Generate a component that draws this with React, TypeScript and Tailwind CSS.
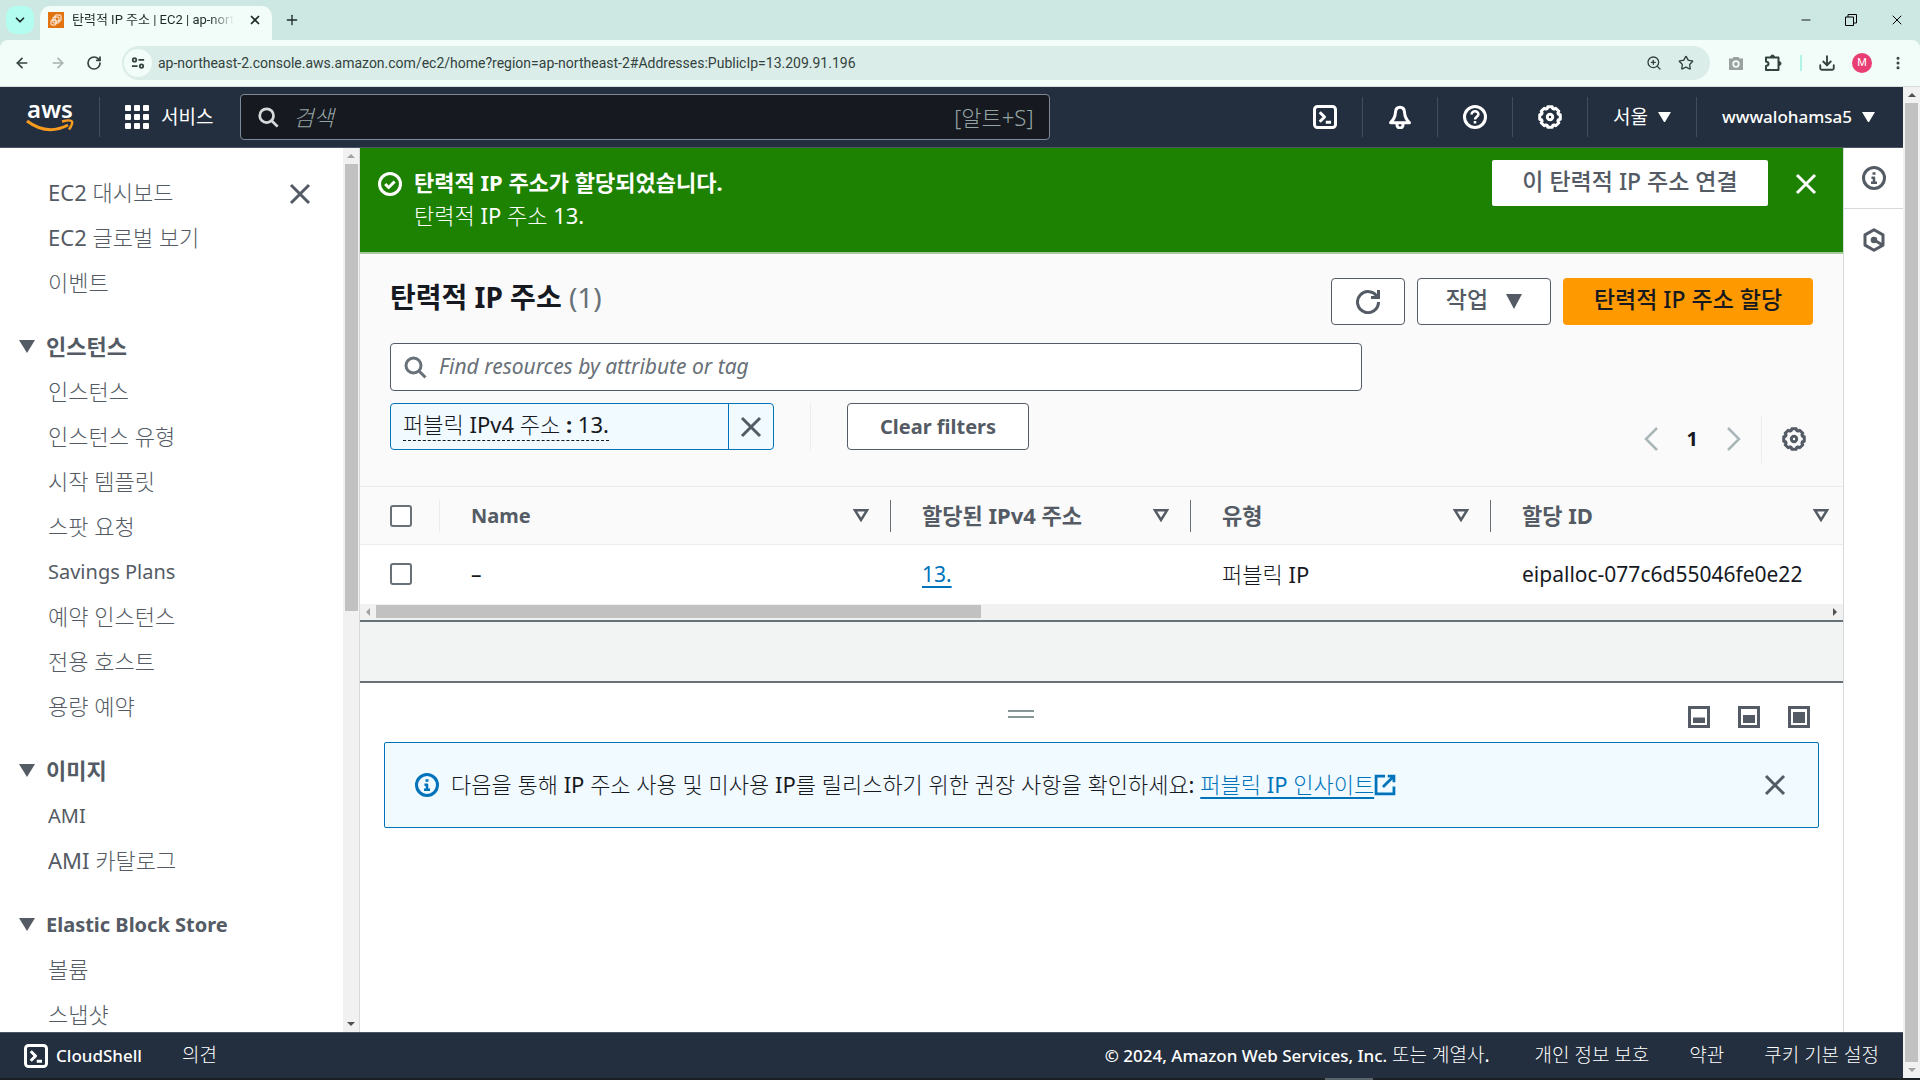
import type { ReactNode } from "react";
import {
    ArrowLeft,
    ArrowRight,
    ChevronDown,
    Download,
    EllipsisVertical,
    Minus,
    Plus,
    RotateCw,
    Star,
    X,
    ZoomIn,
} from "lucide-react";

const sections = [
    { title: "", items: ["EC2 대시보드", "EC2 글로벌 보기", "이벤트"] },
    {
        title: "인스턴스",
        items: [
            "인스턴스",
            "인스턴스 유형",
            "시작 템플릿",
            "스팟 요청",
            "Savings Plans",
            "예약 인스턴스",
            "전용 호스트",
            "용량 예약",
        ],
    },
    { title: "이미지", items: ["AMI", "AMI 카탈로그"] },
    { title: "Elastic Block Store", items: ["볼륨", "스냅샷"] },
];

const columns = [
    { label: "Name", width: "w-[451px]" },
    { label: "할당된 IPv4 주소", width: "w-[300px]" },
    { label: "유형", width: "w-[300px]" },
    { label: "할당 ID", width: "" },
];

// Body text uses the light Hangul cut; headings and buttons need the full family
const strongFont = "font-['Noto_Sans','Noto_Sans_CJK_KR',sans-serif]";

// Latin labels run wider than Hangul ones, so they are set a little smaller
const labelSize = (text: string) => (/[가-힣]/.test(text) ? "text-[22px]" : "text-xl");

// Eight soft teeth around the centre of a 16x16 box
const gearPath =
    Array.from({ length: 8 })
        .flatMap((_, i) =>
            [
                [-12, 7],
                [12, 7],
                [18, 5.9],
                [27, 5.9],
            ].map(([offset, r]) => {
                const a = ((i * 45 + offset) * Math.PI) / 180;
                return `${(8 + r * Math.cos(a)).toFixed(2)} ${(8 + r * Math.sin(a)).toFixed(2)}`;
            }),
        )
        .map((p, i) => (i === 0 ? "M" : "L") + p)
        .join("") + "Z";

function Icon({ children, className = "size-6" }: { children: ReactNode; className?: string }) {
    return (
        <svg
            viewBox="0 0 16 16"
            fill="none"
            stroke="currentColor"
            strokeWidth="2"
            strokeLinejoin="round"
            className={`shrink-0 ${className}`}
            aria-hidden="true"
        >
            {children}
        </svg>
    );
}

const CloseIcon = ({ className }: { className?: string }) => (
    <Icon className={className}>
        <path d="M2 2l12 12M14 2L2 14" />
    </Icon>
);

const SearchIcon = ({ className }: { className?: string }) => (
    <Icon className={className}>
        <circle cx="7" cy="7" r="5" />
        <path d="M15 15l-4.5-4.5" />
    </Icon>
);

const Gear = () => (
    <Icon>
        <path d={gearPath} />
        <circle cx="8" cy="8" r="1.8" />
    </Icon>
);

const CloudShellIcon = () => (
    <Icon>
        <rect x="1" y="1" width="14" height="14" rx="2" />
        <path d="M4.5 4.8L7.7 8l-3.2 3.2M8.5 11.5H12" />
    </Icon>
);

const InfoIcon = () => (
    <Icon>
        <circle cx="8" cy="8" r="7" />
        <path d="M6.3 7.8H8v3M6 11.2h4M7 5h2" strokeWidth="1.7" />
    </Icon>
);

const Caret = () => (
    <svg viewBox="0 0 12 10" className="w-[13px] shrink-0 fill-current" aria-hidden="true">
        <path d="M0 0h12L6 10z" />
    </svg>
);

const Arrow = ({ d }: { d: string }) => (
    <svg viewBox="0 0 8 8" className="size-2 shrink-0 fill-current" aria-hidden="true">
        <path d={d} />
    </svg>
);

function Browser() {
    return (
        <header className="bg-[#cde8e2] font-['Roboto','Noto_Sans_CJK_KR',sans-serif] text-[#1c2b28]">
            <div className="flex h-10 items-end">
                <button aria-label="탭 검색" className="mb-1.5 ml-1.5 flex size-7 items-center justify-center rounded-[10px] bg-[#b2fdef]">
                    <ChevronDown className="size-3.5" strokeWidth={3} />
                </button>
                <div className="ml-1.5 flex h-[34px] w-[232px] items-center rounded-t-[10px] bg-[#f2fcf9] pb-1.5 pl-2 pr-2.5">
                    <svg viewBox="0 0 16 16" className="size-4 shrink-0" fill="none" stroke="#fff" aria-hidden="true">
                        <path d="M0 0h16v16H0z" fill="#e2730f" stroke="none" />
                        <rect x="7" y="3" width="6" height="6" rx="1" />
                        <rect x="5" y="5" width="6" height="6" rx="1" />
                        <rect x="3" y="8" width="5" height="5" rx="1" />
                    </svg>
                    <span className="ml-2 bg-linear-to-r from-[#1c2b28] from-85% to-transparent bg-clip-text text-[13px] whitespace-nowrap text-transparent">
                        탄력적 IP 주소 | EC2 | ap-nort
                    </span>
                    <button aria-label="탭 닫기" className="ml-auto">
                        <X className="size-3.5" strokeWidth={3} />
                    </button>
                </div>
                <button aria-label="새 탭" className="mb-3 ml-3">
                    <Plus className="size-4" />
                </button>
                <div className="mb-3 ml-auto flex items-center gap-8 pr-[15px] text-black">
                    <Minus className="size-3.5" strokeWidth={1.5} />
                    <svg viewBox="0 0 12 12" className="size-3" fill="none" stroke="currentColor" aria-hidden="true">
                        <path d="M.5 3h8v8.500h-8zM3 3V.5h8.500V9H8.500" />
                    </svg>
                    <X className="size-4" strokeWidth={1.5} />
                </div>
            </div>
            <div className="flex h-[47px] items-center rounded-t-lg border-b border-[#d5dfdd] bg-[#f2fcf9] px-3.5 text-[#33423f]">
                <ArrowLeft className="size-4" strokeWidth={2.5} />
                <ArrowRight className="ml-5 size-4 opacity-40" strokeWidth={2.5} />
                <RotateCw className="ml-5 size-4" strokeWidth={2.5} />
                <div className="ml-5 flex h-[34px] flex-1 items-center rounded-full bg-[#dbede8] pr-4 pl-0.5">
                    <span className="flex size-7 items-center justify-center rounded-full bg-[#f2fcf9]">
                        <Icon className="size-3.5">
                            <circle cx="4" cy="4.500" r="2" />
                            <path d="M8.500 4.500H15M1 11.500h6.500" />
                            <circle cx="12" cy="11.500" r="2" />
                        </Icon>
                    </span>
                    <input
                        aria-label="주소창"
                        readOnly
                        value="ap-northeast-2.console.aws.amazon.com/ec2/home?region=ap-northeast-2#Addresses:PublicIp=13.209.91.196"
                        className="ml-1.5 min-w-0 flex-1 bg-transparent text-sm outline-none"
                    />
                    <ZoomIn className="size-4" />
                    <Star className="ml-4 size-4" />
                </div>
                <svg viewBox="0 0 16 16" className="ml-[18px] size-4 text-[#9aa19f]" aria-hidden="true">
                    <path d="M1 3.500h3.500L5.500 2h5l1 1.500H15V15H1z" fill="currentColor" />
                    <circle cx="8" cy="9" r="2.800" fill="currentColor" stroke="#f2fcf9" strokeWidth="1.800" />
                </svg>
                <svg viewBox="0 0 18 18" className="ml-5 size-[18px]" fill="none" stroke="currentColor" strokeWidth="2" strokeLinejoin="round" aria-hidden="true">
                    <path d="M2 3.500h12.500V16H2v-4q2.500-.5 2.500-2.300T2 7.500z" />
                    <path d="M6.500 3a2 2 0 0 1 4 0zM15 7.500a2 2 0 0 1 0 4z" fill="currentColor" strokeWidth="1" />
                </svg>
                <span className="ml-[18px] h-4 w-0.5 bg-[#b2f3e8]" />
                <Download className="ml-4 size-[18px]" strokeWidth={2.5} />
                <span className="ml-4 flex size-5 items-center justify-center rounded-full bg-[#e83e74] text-[11px] text-white">M</span>
                <EllipsisVertical className="ml-[18px] size-4" strokeWidth={2.5} />
            </div>
        </header>
    );
}

function TopNav() {
    const divider = <span className="h-10 w-px shrink-0 bg-[#414d5c]" />;
    return (
        <nav className="flex h-[61px] shrink-0 items-center border-b border-[#4b5563] bg-[#232f3e] pr-7 text-white">
            <a href="#home" aria-label="aws" className="ml-[26px] flex w-12 flex-col items-center">
                <span className="text-2xl leading-4 font-semibold">aws</span>
                <svg viewBox="0 0 48 14" className="mt-0.5 w-12" fill="none" stroke="#f79b1e" strokeWidth="3" aria-hidden="true">
                    <path d="M1 2q20 15 41 4" />
                    <path d="M36 2.500q9-2 10 0t-3 8" strokeWidth="2.500" />
                </svg>
            </a>
            <span className="ml-[25px] h-10 w-px bg-[#414d5c]" />
            <button className={`ml-[25px] flex items-center gap-3 text-[19px] ${strongFont}`}>
                <svg viewBox="0 0 24 24" className="size-6 fill-white" aria-hidden="true">
                    {[0, 9, 18].map((y) => [0, 9, 18].map((x) => <rect key={`${x}-${y}`} x={x} y={y} width="6" height="6" rx="1" />))}
                </svg>
                서비스
            </button>
            <div className="ml-[27px] flex h-[46px] max-w-[810px] flex-1 items-center rounded-sm border border-[#7d8998] bg-[#16191f] px-4">
                <SearchIcon className="size-[22px] text-[#d5dbdb]" />
                <input
                    aria-label="검색"
                    placeholder="검색"
                    className="ml-3.5 min-w-0 flex-1 bg-transparent text-[22px] italic outline-none placeholder:text-[#95a5a6]"
                />
                <span className="text-[22px] font-light text-[#95a5a6]">[알트+S]</span>
            </div>
            <div className="ml-auto flex items-center gap-[25px]">
                <button aria-label="CloudShell">
                    <CloudShellIcon />
                </button>
                {divider}
                <button aria-label="알림">
                    <Icon>
                        <path d="M8 1.500c-2 0-2.900 1.600-3 3.300C4.800 8 3.700 10 1.700 11.800h12.600C12.300 10 11.200 8 11 4.800c-.1-1.700-1-3.300-3-3.300z" />
                        <path d="M6 12.500v.8a2 2 0 0 0 4 0v-.8" />
                    </Icon>
                </button>
                {divider}
                <button aria-label="도움말">
                    <Icon>
                        <circle cx="8" cy="8" r="7" />
                        <path d="M5.700 6.300C5.700 5 6.700 4.200 8 4.200s2.300.9 2.300 2c0 1.600-2.300 1.600-2.300 3.400M8 10.700v1.700" strokeWidth="1.700" />
                    </Icon>
                </button>
                {divider}
                <button aria-label="설정">
                    <Gear />
                </button>
                {divider}
                <button className={`flex items-center gap-2.5 text-[19px] ${strongFont}`}>
                    서울 <Caret />
                </button>
                {divider}
                <button className="flex items-center gap-2.5 text-[17px] font-medium">
                    wwwalohamsa5 <Caret />
                </button>
            </div>
        </nav>
    );
}

function Sidebar() {
    return (
        <aside className="flex w-[360px] shrink-0 border-r border-[#d5dbdb] bg-white text-[#545b64]">
            <div className="flex flex-1 overflow-hidden pt-[22px]">
                <div className="flex-1">
                    {sections.map((section) => (
                        <div key={section.title} className="mb-[19px]">
                            {section.title && (
                                <button
                                    className={`flex h-[45px] items-center gap-[11px] pl-[19px] font-bold ${strongFont} ${labelSize(section.title)}`}
                                >
                                    <svg viewBox="0 0 16 13" className="w-4 fill-current" aria-hidden="true">
                                        <path d="M0 0h16L8 13z" />
                                    </svg>
                                    {section.title}
                                </button>
                            )}
                            <ul>
                                {section.items.map((item) => (
                                    <li key={item} className={`h-[45px] pl-12 leading-[45px] ${labelSize(item)}`}>
                                        <a href="#nav">{item}</a>
                                    </li>
                                ))}
                            </ul>
                        </div>
                    ))}
                </div>
                <button aria-label="닫기" className="mt-3 mr-[31px] self-start">
                    <CloseIcon />
                </button>
            </div>
            <div className="flex w-4 flex-col items-center bg-[#f1f1f1] py-1 text-[#a3a3a3]">
                <Arrow d="M0 6h8L4 2z" />
                <div className="mt-1 h-[51%] w-[13px] bg-[#c1c1c1]" />
                <span className="mt-auto text-[#505050]">
                    <Arrow d="M0 2h8L4 6z" />
                </span>
            </div>
        </aside>
    );
}

function Flash() {
    return (
        <div className="flex h-[106px] shrink-0 items-start border-b-2 border-[#a9c9a0] bg-[#1d8102] pt-3 pr-[25px] pl-[18px] text-[22px] text-white">
            <Icon className="mt-3 size-6">
                <circle cx="8" cy="8" r="7" />
                <path d="M4.800 8l2.300 2.300 4-4" />
            </Icon>
            <div className="mt-1.5 ml-3 leading-[33px]">
                <h2 className={`font-bold ${strongFont}`}>탄력적 IP 주소가 할당되었습니다.</h2>
                <p>탄력적 IP 주소 13.</p>
            </div>
            <button className={`ml-auto h-[46px] w-[276px] rounded-xs bg-white pb-1 text-[23px] font-medium text-[#545b64] ${strongFont}`}>
                이 탄력적 IP 주소 연결
            </button>
            <button aria-label="닫기" className="mt-3 ml-[26px]">
                <CloseIcon />
            </button>
        </div>
    );
}

function AddressTable() {
    return (
        <section className="bg-[#fafafa]">
            <div className="px-[30px] pt-6">
                <div className="flex items-start gap-3">
                    <h1 className={`mr-auto text-[28px] leading-[38px] font-bold text-[#16191f] ${strongFont}`}>
                        탄력적 IP 주소 <span className="font-normal text-[#687078]">(1)</span>
                    </h1>
                    <button aria-label="새로 고침" className="flex h-[47px] w-[74px] items-center justify-center rounded-sm border border-[#545b64] bg-white text-[#545b64]">
                        <Icon>
                            <path d="M10 5h5V0M15 8a7 7 0 1 1-.700-3" strokeLinejoin="miter" />
                        </Icon>
                    </button>
                    <button
                        className={`flex h-[47px] w-[134px] items-center justify-center gap-[18px] rounded-sm border border-[#545b64] bg-white text-[23px] font-medium text-[#545b64] ${strongFont}`}
                    >
                        <span className="pb-1">작업</span>
                        <svg viewBox="0 0 16 15" className="w-4 fill-current" aria-hidden="true">
                            <path d="M0 0h16L8 15z" />
                        </svg>
                    </button>
                    <button className={`h-[47px] w-[250px] rounded-sm bg-[#ff9900] pb-1 text-[23px] font-medium text-[#16191f] ${strongFont}`}>
                        탄력적 IP 주소 할당
                    </button>
                </div>
                <div className="mt-[18px] flex items-end gap-[282px]">
                    <div className="flex-1">
                        <div className="flex h-12 items-center rounded-sm border border-[#545b64] bg-white px-3">
                            <SearchIcon className="size-6 text-[#687078]" />
                            <input
                                aria-label="Find resources"
                                placeholder="Find resources by attribute or tag"
                                className="ml-3 min-w-0 flex-1 bg-transparent text-[21px] italic outline-none placeholder:text-[#687078]"
                            />
                        </div>
                        <div className="mt-3 flex h-[47px] items-center">
                            <div className="flex h-full w-[384px] rounded-sm border border-[#0073bb] bg-[#f1faff]">
                                <div className="flex-1 pt-1 pl-3">
                                    <button className="border-b border-dashed border-[#16191f] text-[22px] leading-8 text-[#16191f]">
                                        퍼블릭 IPv4 주소 <b>:</b> 13.
                                    </button>
                                </div>
                                <button aria-label="필터 제거" className="flex w-[45px] items-center justify-center border-l border-[#0073bb] text-[#545b64]">
                                    <CloseIcon />
                                </button>
                            </div>
                            <span className="mx-9 h-full w-px bg-[#eaeded]" />
                            <button className="h-full w-[182px] rounded-sm border border-[#545b64] bg-white text-xl font-bold text-[#545b64]">
                                Clear filters
                            </button>
                        </div>
                    </div>
                    <div className="-mb-[13px] flex h-12 items-center text-[#aab7b8]">
                        <button aria-label="이전">
                            <svg viewBox="0 0 14 24" className="w-3.5" fill="none" stroke="currentColor" strokeWidth="2.500" aria-hidden="true">
                                <path d="M13 1L2 12l11 11" />
                            </svg>
                        </button>
                        <span className="mx-[29px] text-xl font-bold text-[#16191f]">1</span>
                        <button aria-label="다음">
                            <svg viewBox="0 0 14 24" className="w-3.5" fill="none" stroke="currentColor" strokeWidth="2.500" aria-hidden="true">
                                <path d="M1 1l11 11L1 23" />
                            </svg>
                        </button>
                        <span className="mx-5 h-full w-px bg-[#eaeded]" />
                        <button aria-label="기본 설정" className="mr-[7px] text-[#545b64]">
                            <Gear />
                        </button>
                    </div>
                </div>
            </div>
            <table className="mt-9 w-full table-fixed border-t border-[#eaeded] text-left">
                <thead>
                    <tr className="h-[58px] border-b border-[#eaeded] text-[#545b64]">
                        <th className="w-20 pl-[30px]">
                            <div className="flex h-8 items-center border-r border-[#eaeded]">
                                <input type="checkbox" aria-label="모두 선택" className="size-[22px] appearance-none rounded-[3px] border-2 border-[#687078] bg-white" />
                            </div>
                        </th>
                        {columns.map((col) => (
                            <th key={col.label} className={col.width}>
                                <div
                                    className={`flex h-8 items-center justify-between pl-[31px] font-bold ${strongFont} ${labelSize(col.label)} ${col.width ? "border-r border-[#687078] pr-[21px]" : "pr-3.5"}`}
                                >
                                    {col.label}
                                    <svg viewBox="0 0 16 13" className="w-4" fill="none" stroke="currentColor" strokeWidth="2.500" aria-hidden="true">
                                        <path d="M2 1.300h12L8 11z" />
                                    </svg>
                                </div>
                            </th>
                        ))}
                    </tr>
                </thead>
                <tbody>
                    <tr className="h-[59px] bg-white text-[21px] text-[#16191f]">
                        <td className="pl-[30px]">
                            <input type="checkbox" aria-label="행 선택" className="block size-[22px] appearance-none rounded-[3px] border-2 border-[#687078] bg-white" />
                        </td>
                        <td className="pl-[31px]">–</td>
                        <td className="pl-[31px]">
                            <a href="#address" className="text-[#0073bb] underline decoration-2 underline-offset-4">
                                13.
                            </a>
                        </td>
                        <td className="pl-[31px] text-[22px]">퍼블릭 IP</td>
                        <td className="pl-[31px] whitespace-nowrap">eipalloc-077c6d55046fe0e22</td>
                    </tr>
                </tbody>
            </table>
            <div className="flex h-4 items-center bg-[#f1f1f1] px-1 text-[#a3a3a3]">
                <Arrow d="M6 0v8L2 4z" />
                <div className="ml-1 h-[13px] w-[41%] bg-[#c1c1c1]" />
                <span className="ml-auto text-[#505050]">
                    <Arrow d="M2 0v8l4-4z" />
                </span>
            </div>
        </section>
    );
}

function SplitPanel() {
    return (
        <section className="flex-1 bg-white px-6 text-[#545b64]">
            <div className="flex h-[59px] items-center">
                <button aria-label="크기 조정" className="mt-1 mr-auto ml-[calc(50%-94px)] h-2 w-[26px] border-y-2 border-[#879596]" />
                <div className="flex gap-[28px] pt-2.5 pr-[9px]">
                    {[9.5, 7, 4].map((y) => (
                        <button key={y} aria-label="패널 크기">
                            <svg viewBox="0 0 22 22" className="size-[22px]" fill="none" stroke="currentColor" strokeWidth="3" aria-hidden="true">
                                <rect x="1.500" y="1.500" width="19" height="19" />
                                <rect x="5" y={y + 2} width="12" height={15 - y} fill="currentColor" stroke="none" />
                            </svg>
                        </button>
                    ))}
                </div>
            </div>
            <div className="flex h-[86px] items-center rounded-xs border border-[#0073bb] bg-[#f1faff] pr-[31px] pl-[30px]">
                <span className="text-[#0073bb]">
                    <InfoIcon />
                </span>
                <p className="ml-3 flex items-center text-[22px] whitespace-pre text-[#16191f]">
                    {"다음을 통해 IP 주소 사용 및 미사용 IP를 릴리스하기 위한 권장 사항을 확인하세요: "}
                    <a href="#insights" className="flex items-center text-[#0073bb] underline decoration-2 underline-offset-4">
                        퍼블릭 IP 인사이트
                        <Icon className="size-[22px]">
                            <path d="M8 1.500H1.500v13h13V9M6.500 9.500L14 2M10 1.500h4.500V6" strokeLinejoin="miter" />
                        </Icon>
                    </a>
                </p>
                <button aria-label="닫기" className="ml-auto">
                    <CloseIcon />
                </button>
            </div>
        </section>
    );
}

function Footer() {
    return (
        <footer className="flex h-[46px] shrink-0 items-center border-t border-[#4b5563] bg-[#232f3e] px-6 text-[19px] text-white">
            <button className="flex items-center gap-2 text-[17px] font-medium">
                <CloudShellIcon />
                CloudShell
            </button>
            <a href="#feedback" className="ml-10">의견</a>
            <span className="ml-auto">
                <span className="text-[17px] font-medium">© 2024, Amazon Web Services, Inc.</span> 또는 계열사.
            </span>
            <a href="#privacy" className="ml-[45px]">개인 정보 보호</a>
            <a href="#terms" className="ml-10">약관</a>
            <a href="#cookies" className="ml-10">쿠키 기본 설정</a>
        </footer>
    );
}

export default function App() {
    return (
        <div className="flex h-screen flex-col overflow-hidden bg-white font-['Noto_Sans','Noto_Sans_CJK_KR_Light','Noto_Sans_CJK_KR',sans-serif]">
            <Browser />
            <div className="flex min-h-0 flex-1">
                <div className="flex min-w-0 flex-1 flex-col">
                    <TopNav />
                    <div className="flex min-h-0 flex-1">
                        <Sidebar />
                        <main className="flex min-w-0 flex-1 flex-col">
                            <Flash />
                            <AddressTable />
                            <div className="h-[63px] shrink-0 border-y-2 border-[#687078] bg-[#f2f3f3]" />
                            <SplitPanel />
                        </main>
                        <aside className="flex w-[60px] shrink-0 flex-col border-l border-[#d5dbdb] bg-white text-[#545b64]">
                            <button aria-label="정보" className="flex h-[61px] items-center justify-center border-b border-[#d5dbdb]">
                                <InfoIcon />
                            </button>
                            <button aria-label="진단" className="flex h-[61px] items-center justify-center">
                                <Icon>
                                    <path d="M8 1.200l6 3.400v6.800l-6 3.400-6-3.400V4.600z" />
                                    <path d="M8 8l5.500 3.200" />
                                    <circle cx="8" cy="8" r="1.200" fill="currentColor" />
                                </Icon>
                            </button>
                        </aside>
                    </div>
                    <Footer />
                </div>
                <div className="flex w-[17px] shrink-0 flex-col items-center bg-[#f1f1f1] py-1 text-[#505050]">
                    <Arrow d="M0 6h8L4 2z" />
                    <div className="my-1 w-[13px] flex-1 bg-[#c1c1c1]" />
                    <span className="text-[#a3a3a3]">
                        <Arrow d="M0 2h8L4 6z" />
                    </span>
                </div>
            </div>
            <div className="h-0.5 shrink-0 bg-[#1b2123]">
                <div className="ml-[69%] h-full w-12 bg-[#59636b]" />
            </div>
        </div>
    );
}
